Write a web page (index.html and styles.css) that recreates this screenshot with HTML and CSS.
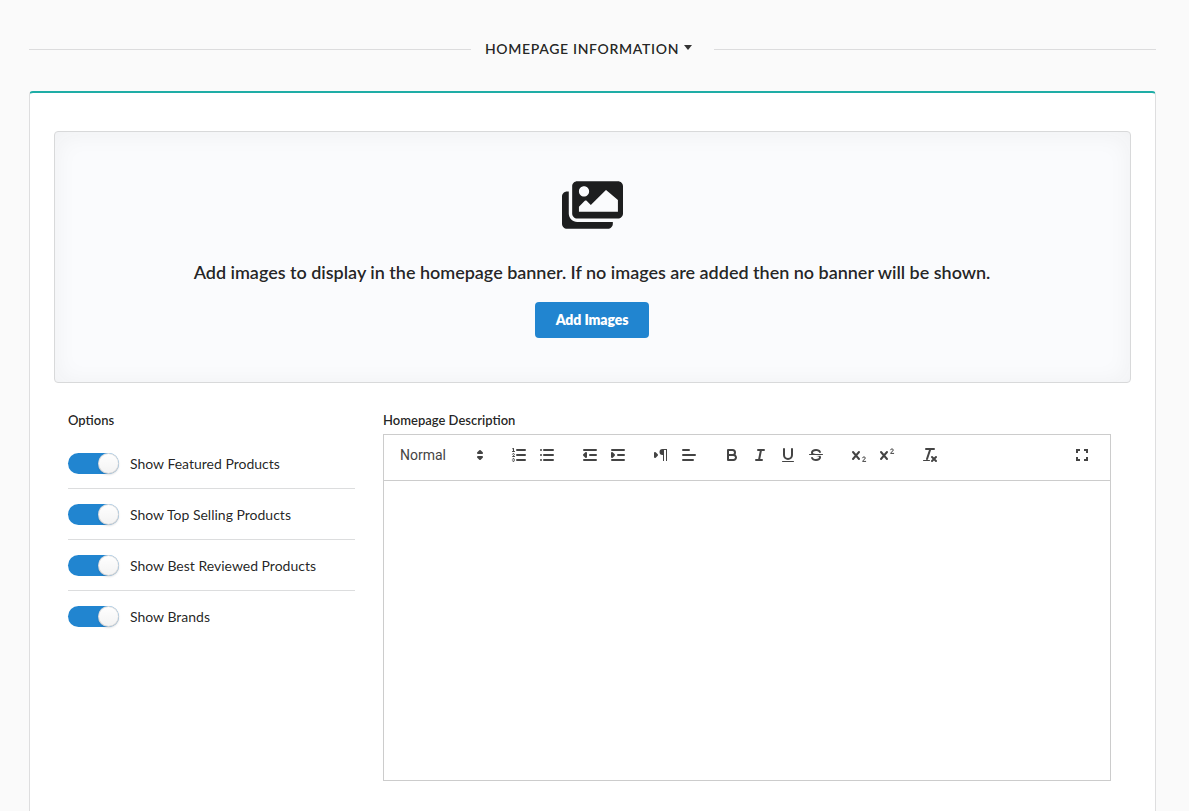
FILE: index.html
```html
<!DOCTYPE html>
<html lang="en">
<head>
<meta charset="utf-8">
<title>Homepage Information</title>
<link rel="stylesheet" href="styles.css">
</head>
<body>
<main class="page">
  <h4 class="divider"><span class="divider-text">Homepage Information<i class="caret"></i></span></h4>
  <section class="segment">
    <div class="banner">
      <svg class="images-icon" viewBox="0 32 576 448"><path d="M480 416v16c0 26.51-21.49 48-48 48H48c-26.51 0-48-21.49-48-48V176c0-26.51 21.49-48 48-48h16v208c0 44.112 35.888 80 80 80h336zm96-80V80c0-26.51-21.49-48-48-48H144c-26.51 0-48 21.49-48 48v256c0 26.51 21.49 48 48 48h384c26.51 0 48-21.49 48-48zM256 128c0 26.51-21.49 48-48 48s-48-21.49-48-48 21.49-48 48-48 48 21.49 48 48zm-96 144l55.515-55.515c4.686-4.686 12.284-4.686 16.971 0L272 256l135.515-135.515c4.686-4.686 12.284-4.686 16.971 0L528 208v112H160v-48z"/></svg>
      <p class="banner-text">Add images to display in the homepage banner. If no images are added then no banner will be shown.</p>
      <button class="button">Add Images</button>
    </div>
    <div class="columns">
      <div class="options">
        <div class="label">Options</div>
        <div class="option"><span class="toggle"></span><span class="option-text">Show Featured Products</span></div>
        <div class="option"><span class="toggle"></span><span class="option-text">Show Top Selling Products</span></div>
        <div class="option"><span class="toggle"></span><span class="option-text">Show Best Reviewed Products</span></div>
        <div class="option"><span class="toggle"></span><span class="option-text">Show Brands</span></div>
      </div>
      <div class="description">
        <div class="label">Homepage Description</div>
        <div class="editor">
          <div class="toolbar">
            <div class="picker"><span>Normal</span><svg viewBox="0 0 18 18"><polygon class="f s" points="7 11 9 13 11 11 7 11"/><polygon class="f s" points="7 7 9 5 11 7 7 7"/></svg></div>
            <div class="group">
              <button class="tool"><svg viewBox="0 0 18 18"><path class="s" d="M7 4H15M7 9H15M7 14H15"/><path class="s thin" d="M2.5 5.5H4.5"/><path class="f" d="M3.5,6A0.5,0.5,0,0,1,3,5.5V3.085l-0.276.138A0.5,0.5,0,0,1,2.053,3c-0.124-.247-0.023-0.324.224-0.447l1-.5A0.5,0.5,0,0,1,4,2.5v3A0.5,0.5,0,0,1,3.5,6Z"/><path class="s thin" d="M4.5,10.5h-2c0-.234,1.85-1.076,1.85-2.234A0.959,0.959,0,0,0,2.5,8.156"/><path class="s thin" d="M2.5,14.846a0.959,0.959,0,0,0,1.85-.109A0.7,0.7,0,0,0,3.75,14a0.688,0.688,0,0,0,.6-0.736,0.959,0.959,0,0,0-1.85-.109"/></svg></button>
              <button class="tool"><svg viewBox="0 0 18 18"><path class="s" d="M6 4H15M6 9H15M6 14H15M3 4H3M3 9H3M3 14H3"/></svg></button>
            </div>
            <div class="group">
              <button class="tool"><svg viewBox="0 0 18 18"><path class="f s" d="M5 7V11L3 9Z"/><path class="s" d="M3 14H15M3 4H15M9 9H15"/></svg></button>
              <button class="tool"><svg viewBox="0 0 18 18"><path class="s" d="M3 14H15M3 4H15M9 9H15"/><path class="f s" d="M3 7V11L5 9Z"/></svg></button>
            </div>
            <div class="group">
              <button class="tool"><svg viewBox="0 0 18 18"><polygon class="f s" points="3 11 5 9 3 7 3 11"/><path class="f" d="M11 3H15V4H11ZM11 3H12V15H11ZM14 3H15V15H14Z"/><path class="f s" d="M10.5 4H11V8H10.5A2 2 0 0 1 10.5 4Z"/></svg></button>
              <button class="tool"><svg viewBox="0 0 18 18"><path class="s" d="M3 9H15M3 14H13M3 4H9"/></svg></button>
            </div>
            <div class="group">
              <button class="tool"><svg viewBox="0 0 18 18"><path class="s" d="M5,4H9.5A2.5,2.5,0,0,1,12,6.5v0A2.5,2.5,0,0,1,9.5,9H5V4Z"/><path class="s" d="M5,9h5.5A2.5,2.5,0,0,1,13,11.5v0A2.5,2.5,0,0,1,10.5,14H5V9Z"/></svg></button>
              <button class="tool"><svg viewBox="0 0 18 18"><path class="s" d="M7 4H13M5 14H11M8 14L10 4"/></svg></button>
              <button class="tool"><svg viewBox="0 0 18 18"><path class="s" d="M5,3V9a4.012,4.012,0,0,0,4,4H9a4.012,4.012,0,0,0,4-4V3"/><rect class="f" x="3" y="15" width="12" height="1" rx=".5"/></svg></button>
              <button class="tool"><svg viewBox="0 0 18 18"><path class="s thin" d="M15.5 8.5H2.5"/><path class="f" d="M9.007,8C6.542,7.791,6,7.519,6,6.5,6,5.792,7.283,5,9,5c1.571,0,2.765.679,2.969,1.309a1,1,0,0,0,1.9-.617C13.356,4.106,11.354,3,9,3,6.2,3,4,4.538,4,6.5a3.2,3.2,0,0,0,.5,1.843Z"/><path class="f" d="M8.984,10C11.457,10.208,12,10.479,12,11.5c0,0.708-1.283,1.5-3,1.5-1.571,0-2.765-.679-2.969-1.309a1,1,0,1,0-1.9.617C4.644,13.894,6.646,15,9,15c2.8,0,5-1.538,5-3.5a3.2,3.2,0,0,0-.5-1.843Z"/></svg></button>
            </div>
            <div class="group">
              <button class="tool"><svg viewBox="0 0 18 18"><path class="s" d="M3 6L9 13M9 6L3 13"/><path class="s thin" d="M12.6 11.8A1.4 1.4 0 0 1 15.3 12C15.3 13.4 12.7 14 12.6 15.4H15.7"/></svg></button>
              <button class="tool"><svg viewBox="0 0 18 18"><path class="s" d="M3 6L9 13M9 6L3 13"/><path class="s thin" d="M12.6 3.8A1.4 1.4 0 0 1 15.3 4C15.3 5.4 12.7 6 12.6 7.4H15.7"/></svg></button>
            </div>
            <div class="group">
              <button class="tool"><svg viewBox="0 0 18 18"><path class="s" d="M5 3H13M6 13L9.35 3M11 11L15 15M15 11L11 15"/><rect class="f" x="2" y="14" width="7" height="1" rx=".5"/></svg></button>
            </div>
            <button class="tool expand"><svg viewBox="0 0 18 18"><path class="s corner" d="M4 7V4H7M11 4H14V7M14 11V14H11M7 14H4V11"/></svg></button>
          </div>
          <div class="content"></div>
        </div>
      </div>
    </div>
  </section>
</main>
</body>
</html>
```
FILE: styles.css
```css
* { box-sizing: border-box; }
body {
  margin: 0;
  background: #fafafa;
  color: rgba(0, 0, 0, .87);
  font: 14px/20px Lato, "Liberation Sans", sans-serif;
}
.page {
  display: flex;
  flex-direction: column;
  height: 100vh;
  padding: 39px 33px 0 29px;
}

.divider {
  display: flex;
  align-items: center;
  margin: 0 0 32px;
  font-size: 14px;
  font-weight: 600;
  line-height: 20px;
  letter-spacing: .66px;
  text-transform: uppercase;
}
.divider::before, .divider::after {
  content: "";
  flex: 1;
  height: 1px;
  background: #dcdcdd;
}
.divider-text { display: flex; align-items: center; padding: 0 22px 0 14px; }
.caret {
  margin: 0 0 4px 5px;
  border: 4px solid transparent;
  border-top: 5px solid #333;
  border-bottom: 0;
}

.segment {
  flex: 1;
  padding: 38px 24px 0;
  background: #fff;
  border: 1px solid #dededf;
  border-top: 2px solid #1fada6;
  border-bottom: 0;
  border-radius: 4px 4px 0 0;
}
.banner {
  display: flex;
  flex-direction: column;
  align-items: center;
  height: 252px;
  padding: 49px 1px 0 0;
  background: #fafbfd;
  border: 1px solid #d8d9da;
  border-radius: 4px;
  box-shadow: inset 0 2px 25px rgba(34, 36, 38, .05);
}
.images-icon { width: 61px; height: 48px; fill: #1d1e1f; }
.banner-text {
  margin: 31px 0 18px;
  font-size: 18px;
  font-weight: 600;
  line-height: 24px;
  letter-spacing: -.02px;
}
.button {
  width: 114px;
  height: 36px;
  padding: 0;
  border: 0;
  border-radius: 4px;
  background: #2185d0;
  color: #fff;
  font: 800 14px/14px Lato, sans-serif;
  letter-spacing: -.1px;
}

.columns { display: grid; grid-template-columns: 287px 728px; gap: 28px; padding: 28px 14px 0; }
.label { height: 23px; font-size: 13px; font-weight: 600; line-height: 19px; }
.option {
  display: flex;
  align-items: center;
  gap: 11px;
  height: 51px;
  border-bottom: 1px solid #dcddde;
}
.option-text { padding-top: 2px; }
.options .label { height: 27px; }
.option:last-child { border-bottom-color: transparent; }
.toggle {
  display: flex;
  justify-content: flex-end;
  width: 51px;
  height: 21px;
  border-radius: 11px;
  background: #2185d0;
}
.toggle::after {
  content: "";
  width: 21px;
  height: 21px;
  border-radius: 50%;
  background: linear-gradient(transparent, rgba(0, 0, 0, .05)) #fff;
  box-shadow: 0 1px 2px rgba(34, 36, 38, .15), inset 0 0 0 1px rgba(34, 36, 38, .15);
}

.editor { height: 347px; border: 1px solid #ccc; }
.toolbar {
  display: flex;
  align-items: flex-start;
  gap: 15px;
  height: 46px;
  padding: 8px;
  border-bottom: 1px solid #ccc;
}
.group { display: flex; }
.picker {
  display: flex;
  align-items: center;
  justify-content: space-between;
  width: 98px;
  height: 24px;
  padding: 0 1px 0 8px;
  color: #444;
  font: 400 14px/24px Roboto, sans-serif;
}
.picker svg { width: 18px; height: 18px; }
.tool {
  width: 28px;
  height: 24px;
  padding: 3px 5px;
  border: 0;
  background: none;
}
.tool svg { display: block; width: 18px; height: 18px; }
.f { fill: #444; }
.s { fill: none; stroke: #444; stroke-width: 2; stroke-linecap: round; stroke-linejoin: round; }
.f.s { fill: #444; }
.s.thin { stroke-width: 1; }
.s.corner { stroke-linecap: butt; stroke-linejoin: miter; }
.expand { margin: 0 6px 0 auto; }
```
